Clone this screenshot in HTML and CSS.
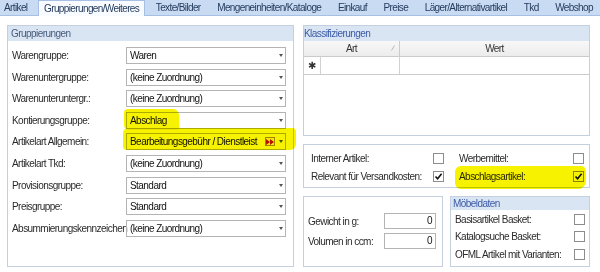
FILE: index.html
```html
<!DOCTYPE html>
<html lang="de">
<head>
  <meta charset="UTF-8" />
  <title>Artikel - Gruppierungen/Weiteres</title>
  <link rel="stylesheet" href="styles.css">
</head>
<body>
  <!-- Reiter -->
  <div class="tabs">
    <div class="tab first">Artikel</div>
    <div class="tab active">Gruppierungen/Weiteres</div>
    <div class="tab">Texte/Bilder</div>
    <div class="tab">Mengeneinheiten/Kataloge</div>
    <div class="tab">Einkauf</div>
    <div class="tab">Preise</div>
    <div class="tab">Läger/Alternativartikel</div>
    <div class="tab">Tkd</div>
    <div class="tab">Webshop</div>
  </div>

  <div class="page">
    <!-- Gruppierungen -->
    <div class="group group-left">
      <div class="group-head">Gruppierungen</div>
      <div class="form-rows">
        <div class="field"><span class="label">Warengruppe:</span><div class="combo">Waren</div></div>
        <div class="field"><span class="label">Warenuntergruppe:</span><div class="combo">(keine Zuordnung)</div></div>
        <div class="field"><span class="label">Warenunteruntergr.:</span><div class="combo">(keine Zuordnung)</div></div>
        <div class="field"><span class="label">Kontierungsgruppe:</span><div class="combo">Abschlag</div></div>
        <div class="field"><span class="label">Artikelart Allgemein:</span>
          <div class="combo has-btn"><span class="combo-text">Bearbeitungsgebühr / Dienstleist</span>
            <span class="jump-btn"><svg width="8" height="6" viewBox="0 0 8 6"><path d="M0 0 L4 3 L0 6 Z M4 0 L8 3 L4 6 Z" fill="#c0102a"/></svg></span>
          </div>
        </div>
        <div class="field"><span class="label">Artikelart Tkd:</span><div class="combo">(keine Zuordnung)</div></div>
        <div class="field"><span class="label">Provisionsgruppe:</span><div class="combo">Standard</div></div>
        <div class="field"><span class="label">Preisgruppe:</span><div class="combo">Standard</div></div>
        <div class="field"><span class="label">Absummierungskennzeichen</span><div class="combo">(keine Zuordnung)</div></div>
      </div>
    </div>

    <div class="right-col">
      <!-- Klassifizierungen -->
      <div class="group klass">
        <div class="group-head blue flush">Klassifizierungen</div>
        <div class="grid-head">
          <div class="gh-art">Art<svg class="sort" width="4" height="6" viewBox="0 0 4 6"><path d="M0.5 5.5 L3.5 0.5" stroke="#b8b8b8" stroke-width="1"/></svg></div>
          <div class="gh-wert">Wert</div>
        </div>
        <div class="grid-row">
          <div class="gr-ind">✱</div>
          <div class="gr-art"></div>
          <div class="gr-wert"></div>
        </div>
      </div>

      <!-- Kennzeichen -->
      <div class="box flags">
        <span class="label">Interner Artikel:</span><span class="check"></span><span></span>
        <span class="label">Werbemittel:</span><span class="check"></span>
        <span class="label">Relevant für Versandkosten:</span><span class="check on"><svg width="9" height="9" viewBox="0 0 9 9"><path d="M1.5 4.5 L3.6 6.8 L7.6 1.8" fill="none" stroke="#111" stroke-width="1.6"/></svg></span><span></span>
        <span class="label">Abschlagsartikel:</span><span class="check on"><svg width="9" height="9" viewBox="0 0 9 9"><path d="M1.5 4.5 L3.6 6.8 L7.6 1.8" fill="none" stroke="#111" stroke-width="1.6"/></svg></span>
      </div>

      <div class="bottom-row">
        <div class="box measures">
          <span class="label">Gewicht in g:</span><div class="num-input">0</div>
          <span class="label">Volumen in ccm:</span><div class="num-input">0</div>
        </div>
        <div class="group moebel">
          <div class="group-head blue small">Möbeldaten</div>
          <div class="moebel-rows">
            <span class="label">Basisartikel Basket:</span><span class="check"></span>
            <span class="label">Katalogsuche Basket:</span><span class="check"></span>
            <span class="label">OFML Artikel mit Varianten:</span><span class="check"></span>
          </div>
        </div>
      </div>
    </div>
  </div>

  <!-- Textmarker -->
  <div class="marker m1"></div>
  <div class="marker m2"></div>
  <div class="marker m3"></div>
</body>
</html>
```

FILE: styles.css
```css
body {
  margin: 0;
  width: 600px;
  height: 272px;
  overflow: hidden;
  position: relative;
  background: #fff;
  font-family: "Liberation Sans", Arial, sans-serif;
  font-size: 10px;
  letter-spacing: -0.55px;
  color: #2b2b2b;
}

/* Reiter */
.tabs {
  display: flex;
  align-items: flex-start;
  gap: 4.6px;
  height: 15px;
  background: #c9dbf2;
  border-bottom: 1px solid #a6c0e4;
  letter-spacing: -0.62px;
}
.tab {
  line-height: 15px;
  padding: 0 6px;
  color: #253c5e;
  white-space: nowrap;
}
.tab.first {
  padding-left: 4px;
}
.tab.active {
  background: #f8fbff;
  border: 1px solid #a6c0e4;
  border-bottom: none;
  padding: 0 5px;
  margin-bottom: -1px;
  height: 16px;
  box-sizing: border-box;
  line-height: 15px;
}

.page {
  display: flex;
  gap: 9px;
  padding: 9px 0 0 7px;
}

/* Gruppenrahmen */
.group, .box {
  border: 1px solid #c4d0e0;
  box-sizing: border-box;
  background: #fff;
}
.group-head {
  height: 15px;
  line-height: 15px;
  background: #dae5f4;
  padding-left: 3px;
  color: #465b7b;
}
.group-head.blue { color: #3a5ba6; }
.group-head.flush { padding-left: 0; }
.group-head.small {
  height: 13px;
  line-height: 13px;
  padding-left: 2px;
}

.group-left {
  width: 287px;
  height: 242px;
}
.form-rows {
  padding: 6px 0 0 4px;
}
.field {
  display: flex;
  align-items: center;
  height: 17px;
  margin-bottom: 4.6px;
}
.field .label {
  width: 114px;
  white-space: nowrap;
}
.combo {
  position: relative;
  width: 160px;
  height: 17px;
  box-sizing: border-box;
  border: 1px solid #b4b4b4;
  padding-left: 3px;
  line-height: 15px;
  color: #111;
  white-space: nowrap;
}
.combo::after {
  content: "";
  position: absolute;
  right: 2px;
  top: 6px;
  border-left: 2.5px solid transparent;
  border-right: 2.5px solid transparent;
  border-top: 3px solid #555;
}
.jump-btn {
  position: absolute;
  right: 10px;
  top: 3px;
  width: 10px;
  height: 9px;
  box-sizing: border-box;
  border: 1px solid #a88a00;
  background: #fff7b0;
  display: flex;
  align-items: center;
  justify-content: center;
}

.right-col {
  width: 287px;
  display: flex;
  flex-direction: column;
}

/* Klassifizierungen */
.klass {
  height: 111px;
}
.grid-head {
  display: flex;
  height: 16px;
  box-sizing: border-box;
  background: linear-gradient(#f8f8f8, #ececec);
  border-bottom: 1px solid #cbcbcb;
  line-height: 15px;
  color: #333;
}
.gh-art {
  position: relative;
  width: 95px;
  text-align: center;
  border-right: 1px solid #cbcbcb;
}
.sort {
  position: absolute;
  right: 4px;
  top: 4px;
}
.gh-wert {
  flex: 1;
  text-align: center;
}
.grid-row {
  display: flex;
  height: 18px;
  box-sizing: border-box;
  border-bottom: 1px solid #cbcbcb;
}
.gr-ind {
  width: 16px;
  border-right: 1px solid #d2d2d2;
  font-family: "DejaVu Sans", sans-serif;
  font-size: 10px;
  line-height: 17px;
  text-align: center;
  color: #333;
}
.gr-art {
  width: 78px;
  border-right: 1px solid #d2d2d2;
}
.gr-wert { flex: 1; }

/* Kennzeichen */
.flags {
  height: 44px;
  margin-top: 8px;
  display: grid;
  grid-template-columns: 122px 11px 15px 114px 11px;
  grid-auto-rows: 14px;
  row-gap: 4.4px;
  align-items: center;
  padding: 6px 0 0 7px;
}
.label { white-space: nowrap; }
.check {
  width: 11px;
  height: 11px;
  box-sizing: border-box;
  border: 1px solid #8c8c8c;
  background: #fff;
  display: flex;
  align-items: center;
  justify-content: center;
}

.bottom-row {
  display: flex;
  gap: 7px;
  margin-top: 8px;
  height: 71px;
}
.measures {
  width: 140px;
  height: 71px;
  display: grid;
  grid-template-columns: 76px 52px;
  grid-auto-rows: 16px;
  row-gap: 4px;
  align-items: center;
  padding: 16px 0 0 4px;
  align-content: start;
}
.num-input {
  height: 16px;
  box-sizing: border-box;
  border: 1px solid #b4b4b4;
  text-align: right;
  padding-right: 3px;
  line-height: 14px;
  color: #111;
}
.moebel {
  width: 140px;
  height: 71px;
}
.moebel-rows {
  display: grid;
  grid-template-columns: 119px 11px;
  grid-auto-rows: 14px;
  row-gap: 3.8px;
  align-items: center;
  padding: 2px 0 0 4px;
}

/* Textmarker */
.marker {
  position: absolute;
  background: #f6f200;
  mix-blend-mode: multiply;
}
.m1 {
  left: 124px;
  top: 109px;
  width: 55px;
  height: 21px;
  border-radius: 4px 6px 3px 5px;
}
.m2 {
  left: 123px;
  top: 128px;
  width: 173px;
  height: 22px;
  border-radius: 5px 4px 6px 4px;
}
.m3 {
  left: 455px;
  top: 166px;
  width: 131px;
  height: 23px;
  border-radius: 6px 5px 8px 6px;
}
```
